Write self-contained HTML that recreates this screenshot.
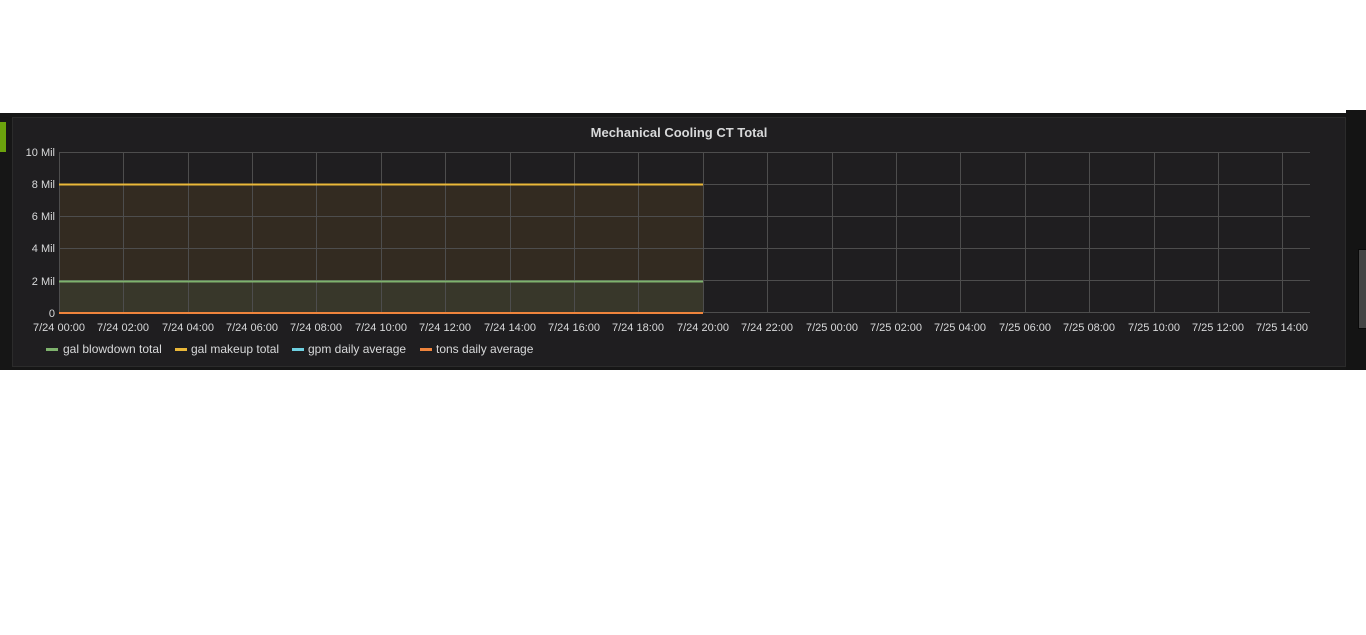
<!DOCTYPE html>
<html><head><meta charset="utf-8"><style>
html,body{margin:0;padding:0;background:#fff;width:1366px;height:635px;overflow:hidden}
svg{display:block}
text{font-family:"Liberation Sans",Arial,sans-serif}
</style></head><body>
<svg width="1366" height="635" viewBox="0 0 1366 635" xmlns="http://www.w3.org/2000/svg">
<rect x="0" y="0" width="1366" height="635" fill="#fff"/>
<rect x="0" y="113" width="1362" height="257" fill="#161616"/>
<rect x="1346" y="110" width="20" height="260" fill="#141414"/>
<rect x="0" y="122" width="6" height="30" fill="#6ba20d"/>
<rect x="12.5" y="117.5" width="1333" height="249" fill="#1f1e20" stroke="#2b2b2b"/>
<rect x="1358.5" y="249.5" width="8" height="79" fill="#444" stroke="#0a0a0a"/>
<text x="679" y="137" fill="#d8d9da" font-size="13" font-weight="bold" text-anchor="middle">Mechanical Cooling CT Total</text>
<rect x="59" y="184" width="644" height="97" fill="#332b21"/>
<rect x="59" y="281" width="644" height="32" fill="#38372a"/>
<g stroke="#4d4d4d" stroke-width="1">
<line x1="59" y1="152.5" x2="1310" y2="152.5"/>
<line x1="59" y1="184.5" x2="1310" y2="184.5"/>
<line x1="59" y1="216.5" x2="1310" y2="216.5"/>
<line x1="59" y1="248.5" x2="1310" y2="248.5"/>
<line x1="59" y1="280.5" x2="1310" y2="280.5"/>
<line x1="59" y1="312.5" x2="1310" y2="312.5"/>
<line x1="59.5" y1="152" x2="59.5" y2="313"/><line x1="123.5" y1="152" x2="123.5" y2="313"/><line x1="188.5" y1="152" x2="188.5" y2="313"/><line x1="252.5" y1="152" x2="252.5" y2="313"/><line x1="316.5" y1="152" x2="316.5" y2="313"/><line x1="381.5" y1="152" x2="381.5" y2="313"/><line x1="445.5" y1="152" x2="445.5" y2="313"/><line x1="510.5" y1="152" x2="510.5" y2="313"/><line x1="574.5" y1="152" x2="574.5" y2="313"/><line x1="638.5" y1="152" x2="638.5" y2="313"/><line x1="703.5" y1="152" x2="703.5" y2="313"/><line x1="767.5" y1="152" x2="767.5" y2="313"/><line x1="832.5" y1="152" x2="832.5" y2="313"/><line x1="896.5" y1="152" x2="896.5" y2="313"/><line x1="960.5" y1="152" x2="960.5" y2="313"/><line x1="1025.5" y1="152" x2="1025.5" y2="313"/><line x1="1089.5" y1="152" x2="1089.5" y2="313"/><line x1="1154.5" y1="152" x2="1154.5" y2="313"/><line x1="1218.5" y1="152" x2="1218.5" y2="313"/><line x1="1282.5" y1="152" x2="1282.5" y2="313"/>
</g>
<line x1="59" y1="184.5" x2="703" y2="184.5" stroke="#eab839" stroke-width="2"/>
<line x1="59" y1="281.5" x2="703" y2="281.5" stroke="#7eb26d" stroke-width="2"/>
<line x1="59" y1="313" x2="703" y2="313" stroke="#ef843c" stroke-width="2"/>
<g fill="#d8d9da" font-size="11" text-anchor="end">
<text x="55" y="156">10 Mil</text><text x="55" y="188">8 Mil</text><text x="55" y="220">6 Mil</text><text x="55" y="252">4 Mil</text><text x="55" y="285">2 Mil</text><text x="55" y="317">0</text>
</g>
<g fill="#d8d9da" font-size="11" text-anchor="middle">
<text x="59" y="331">7/24 00:00</text><text x="123" y="331">7/24 02:00</text><text x="188" y="331">7/24 04:00</text><text x="252" y="331">7/24 06:00</text><text x="316" y="331">7/24 08:00</text><text x="381" y="331">7/24 10:00</text><text x="445" y="331">7/24 12:00</text><text x="510" y="331">7/24 14:00</text><text x="574" y="331">7/24 16:00</text><text x="638" y="331">7/24 18:00</text><text x="703" y="331">7/24 20:00</text><text x="767" y="331">7/24 22:00</text><text x="832" y="331">7/25 00:00</text><text x="896" y="331">7/25 02:00</text><text x="960" y="331">7/25 04:00</text><text x="1025" y="331">7/25 06:00</text><text x="1089" y="331">7/25 08:00</text><text x="1154" y="331">7/25 10:00</text><text x="1218" y="331">7/25 12:00</text><text x="1282" y="331">7/25 14:00</text>
</g>
<rect x="46" y="348" width="12" height="3" fill="#7eb26d"/>
<rect x="175" y="348" width="12" height="3" fill="#eab839"/>
<rect x="292" y="348" width="12" height="3" fill="#6ed0e0"/>
<rect x="420" y="348" width="12" height="3" fill="#ef843c"/>
<g fill="#d8d9da" font-size="12">
<text x="63" y="353">gal blowdown total</text>
<text x="191" y="353">gal makeup total</text>
<text x="308" y="353">gpm daily average</text>
<text x="436" y="353">tons daily average</text>
</g>
</svg>
</body></html>
